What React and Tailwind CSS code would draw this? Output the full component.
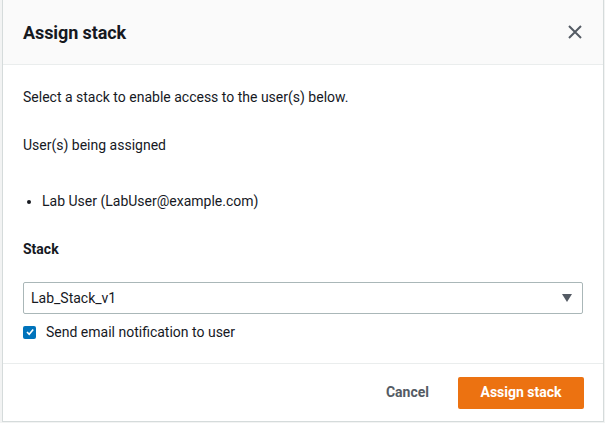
import React from "react";

export default function App() {
  return (
    <div className="w-[605px] h-[423px] bg-[#f2f3f3] overflow-hidden" style={{ fontFamily: "Roboto, 'Noto Sans', sans-serif" }}>
      <div className="ml-[2px] w-[602px] h-[422px] bg-white border border-[#d5dbdb] border-t-0 flex flex-col text-[#16191f]">
        <div className="h-[65px] bg-[#fafafa] border-b border-[#eaeded] flex items-center justify-between pl-[20px] pr-[20px]">
          <h2 className="text-[18px] font-bold tracking-[-0.1px]">Assign stack</h2>
          <svg width="16" height="16" viewBox="0 0 16 16" className="text-[#545b64]">
            <path d="M2 2 L14 14 M14 2 L2 14" stroke="currentColor" strokeWidth="2" fill="none" />
          </svg>
        </div>
        <div className="flex-1 px-[20px] text-[14px]">
          <p className="mt-[22px] leading-[20px]">Select a stack to enable access to the user(s) below.</p>
          <p className="mt-[28px] leading-[20px]">User(s) being assigned</p>
          <ul className="mt-[36px] leading-[20px] list-disc pl-[19px]">
            <li>Lab User (LabUser@example.com)</li>
          </ul>
          <p className="mt-[28px] leading-[20px] font-bold">Stack</p>
          <div className="mt-[23px] h-[32px] border border-[#aab7b8] rounded-[2px] flex items-center justify-between pl-[7px] pr-[9px]">
            <span>Lab_Stack_v1</span>
            <svg width="12" height="10" viewBox="0 0 12 10"><path d="M1 1 L11 1 L6 9 Z" fill="#545b64" /></svg>
          </div>
          <label className="mt-[8px] flex items-center gap-[10px] leading-[20px]">
            <span className="w-[13px] h-[13px] rounded-[2px] bg-[#0073bb] flex items-center justify-center">
              <svg width="10" height="10" viewBox="0 0 10 10"><path d="M2 5 L4.2 7.3 L8.2 2.5" stroke="white" strokeWidth="1.6" fill="none" /></svg>
            </span>
            <span>Send email notification to user</span>
          </label>
        </div>
        <div className="h-[58px] border-t border-[#eaeded] flex items-center justify-end pr-[19px] gap-[29px] text-[14px] font-bold">
          <span className="text-[#545b64]">Cancel</span>
          <button className="h-[32px] w-[126px] bg-[#ec7211] text-white rounded-[2px]">Assign stack</button>
        </div>
      </div>
    </div>
  );
}
